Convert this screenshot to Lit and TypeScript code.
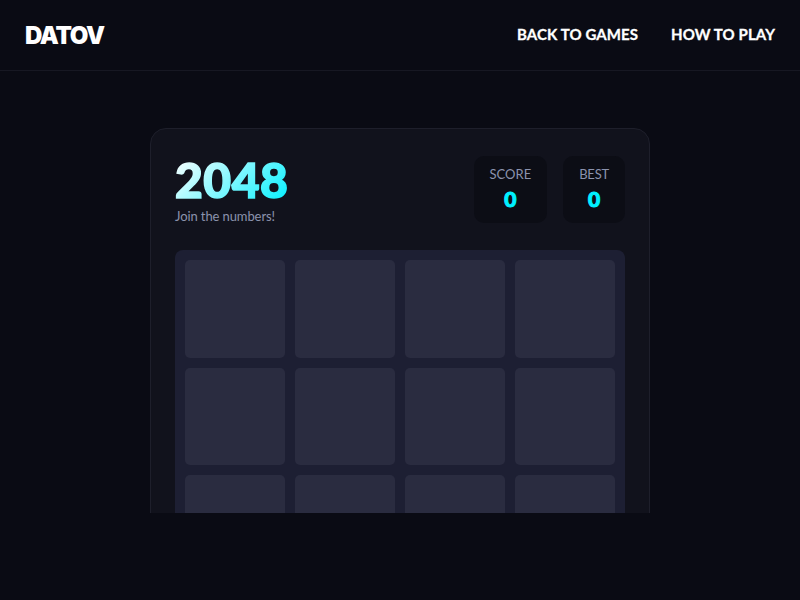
import { LitElement, html, css } from "lit";
import { customElement } from "lit/decorators.js";

@customElement("app-root")
class AppRoot extends LitElement {
    static styles = css`
        :host {
            display: block;
            height: 600px;
            background: #0a0b14;
            font-family: "Lato", "Noto Sans", sans-serif;
            color: #fff;
        }
        header {
            box-sizing: border-box;
            height: 71px;
            display: flex;
            align-items: center;
            justify-content: space-between;
            padding: 0 25px;
            border-bottom: 1px solid #171823;
        }
        .logo {
            font-family: "Inter", sans-serif;
            font-size: 24px;
            line-height: 24px;
            margin-top: 1px;
            font-weight: 900;
            letter-spacing: -1.3px;
        }
        nav {
            display: flex;
            gap: 33px;
            margin-top: -2px;
            font-size: 15px;
            font-weight: 700;
            letter-spacing: 0.1px;
            -webkit-text-stroke: 0.3px #fff;
        }
        main {
            height: 442px;
            overflow: hidden;
            box-sizing: border-box;
            padding-top: 57px;
        }
        .card {
            box-sizing: border-box;
            width: 500px;
            margin: 0 auto;
            padding: 27px 24px;
            background: #11121c;
            border: 1px solid #1e1f2b;
            border-radius: 16px;
        }
        .top {
            display: flex;
            justify-content: space-between;
            margin-bottom: 26px;
        }
        h1 {
            margin: 0;
            font-size: 48px;
            line-height: 48px;
            font-weight: 900;
            letter-spacing: 0.5px;
            width: fit-content;
            background: linear-gradient(135deg, #ffffff, #00f0ff);
            -webkit-background-clip: text;
            background-clip: text;
            color: transparent;
            -webkit-text-stroke: 1.6px transparent;
        }
        .sub {
            margin-top: 4px;
            font-size: 13px;
            line-height: 16px;
            letter-spacing: -0.1px;
            color: #8b93ad;
        }
        .scores {
            display: flex;
            gap: 16px;
        }
        .score {
            box-sizing: border-box;
            height: 67px;
            padding: 10px 16px 0;
            background: #0c0d15;
            border-radius: 10px;
            text-align: center;
        }
        .score span {
            display: block;
            font-size: 13px;
            line-height: 17px;
            color: #8b93ad;
        }
        .score.best span {
            letter-spacing: -0.2px;
        }
        .score b {
            display: block;
            margin-top: 4px;
            font-size: 21px;
            line-height: 24px;
            font-weight: 900;
            color: #00f0ff;
            -webkit-text-stroke: 1px #00f0ff;
        }
        .board {
            display: grid;
            grid-template-columns: repeat(4, 1fr);
            grid-auto-rows: 97.5px;
            gap: 10px;
            padding: 10px;
            background: #1d1f33;
            border-radius: 8px;
        }
        .cell {
            background: #2a2c40;
            border-radius: 5px;
        }
    `;

    render() {
        return html`
            <header>
                <div class="logo">DATOV</div>
                <nav>
                    <span>BACK TO GAMES</span>
                    <span>HOW TO PLAY</span>
                </nav>
            </header>
            <main>
                <div class="card">
                    <div class="top">
                        <div>
                            <h1>2048</h1>
                            <div class="sub">Join the numbers!</div>
                        </div>
                        <div class="scores">
                            <div class="score"><span>SCORE</span><b>0</b></div>
                            <div class="score best"><span>BEST</span><b>0</b></div>
                        </div>
                    </div>
                    <div class="board">
                        ${Array.from({ length: 16 }, () => html`<div class="cell"></div>`)}
                    </div>
                </div>
            </main>
        `;
    }
}
